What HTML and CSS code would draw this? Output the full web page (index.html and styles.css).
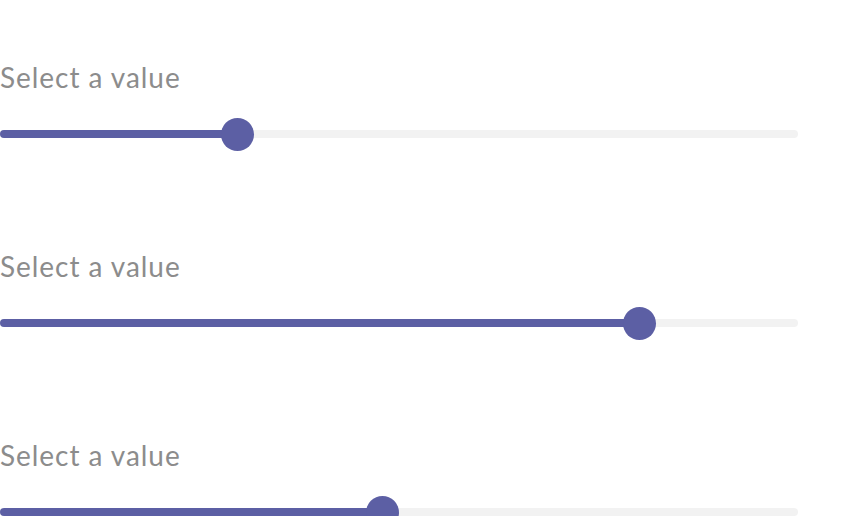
FILE: index.html
```html
<!DOCTYPE html>
<html lang="en">
<head>
<meta charset="utf-8">
<title>Sliders</title>
<link rel="stylesheet" href="styles.css">
</head>
<body>
  <main class="stack">
    <div class="field">
      <label class="field-label">Select a value</label>
      <div class="slider">
        <div class="slider-rail"></div>
        <div class="slider-fill" style="width: 29.8%"></div>
        <div class="slider-thumb" style="left: 29.8%"></div>
      </div>
    </div>
    <div class="field">
      <label class="field-label">Select a value</label>
      <div class="slider">
        <div class="slider-rail"></div>
        <div class="slider-fill" style="width: 80.1%"></div>
        <div class="slider-thumb" style="left: 80.1%"></div>
      </div>
    </div>
    <div class="field">
      <label class="field-label">Select a value</label>
      <div class="slider">
        <div class="slider-rail"></div>
        <div class="slider-fill" style="width: 47.9%"></div>
        <div class="slider-thumb" style="left: 47.9%"></div>
      </div>
    </div>
  </main>
</body>
</html>
```

FILE: styles.css
```css
html, body {
  margin: 0;
  padding: 0;
  background: #ffffff;
}

body {
  font-family: "Lato", "Open Sans", sans-serif;
  overflow: hidden;
}

.stack {
  width: 798px;
  padding-top: 59px;
  display: flex;
  flex-direction: column;
  gap: 110px;
}

.field {
  display: flex;
  flex-direction: column;
  gap: 35px;
}

.field-label {
  font-size: 28px;
  line-height: 36px;
  color: #8c8c8c;
  letter-spacing: 0.95px;
}

.slider {
  position: relative;
  height: 8px;
}

.slider-rail {
  position: absolute;
  inset: 0;
  background: #f2f2f2;
  border-radius: 4px;
}

.slider-fill {
  position: absolute;
  left: 0;
  top: 0;
  bottom: 0;
  background: #5c5fa4;
  border-radius: 4px;
}

.slider-thumb {
  position: absolute;
  top: 50%;
  width: 33px;
  height: 33px;
  margin-left: -16.5px;
  margin-top: -16.5px;
  border-radius: 50%;
  background: #5c5fa4;
}
```
